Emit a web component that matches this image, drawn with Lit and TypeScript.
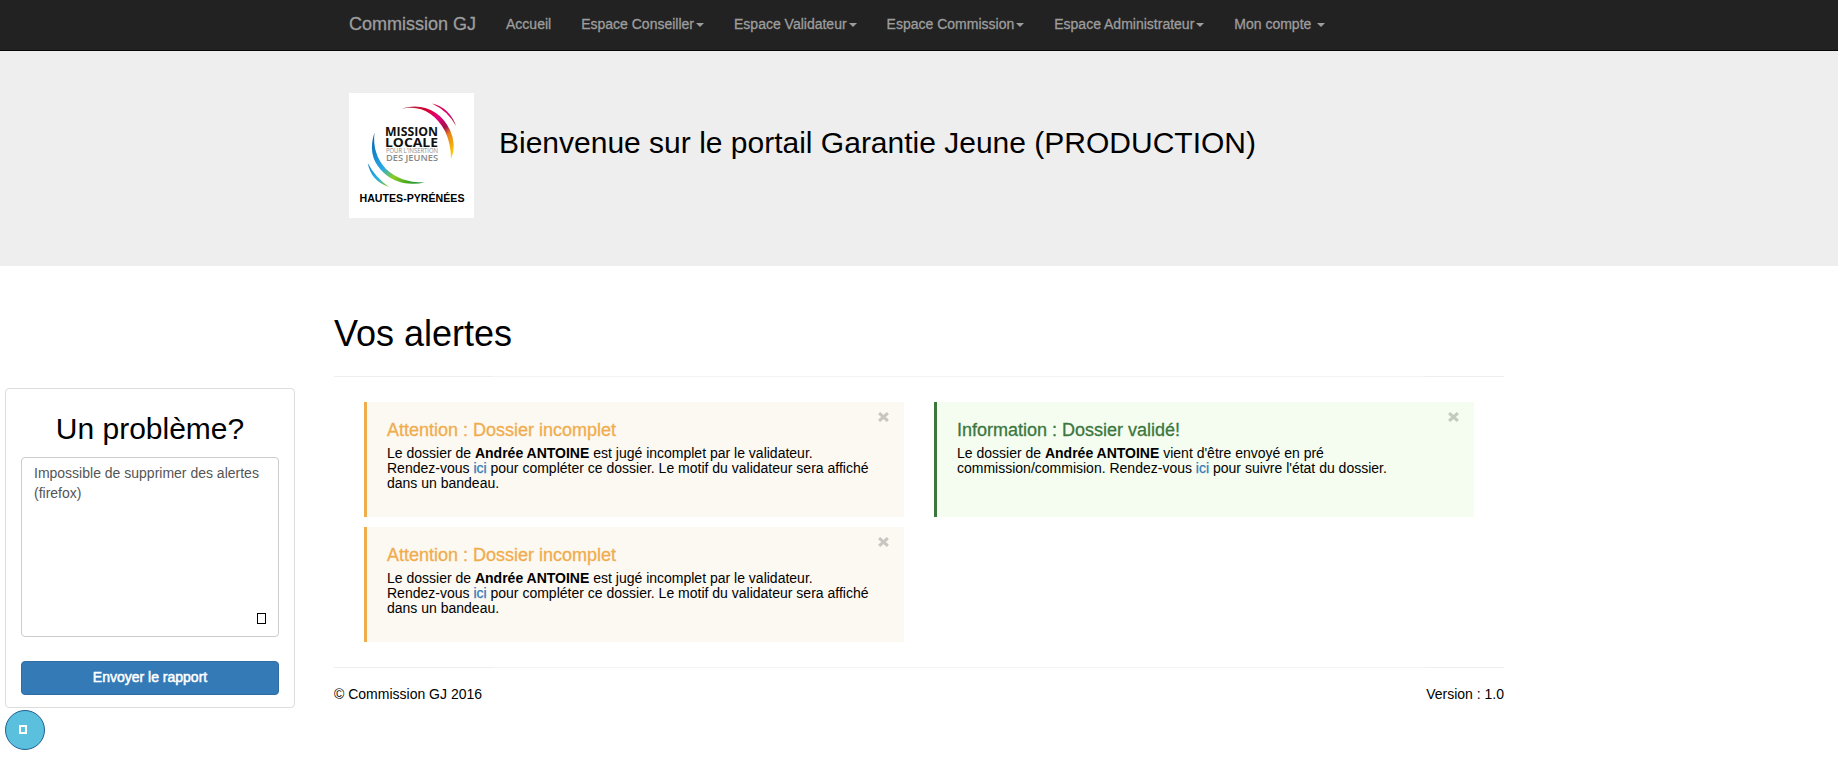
import { LitElement, html, css, svg } from "lit";
import { customElement } from "lit/decorators.js";

const shared = css`
  * { box-sizing: border-box; }
  h1, h2, h4, p { margin: 0; font-weight: 400; }
  a { color: #337ab7; text-decoration: none; }
`;

@customElement("mission-logo")
class MissionLogo extends LitElement {
  static styles = css`
    :host { display: block; width: 125px; height: 125px; background: #fff; }
    svg { display: block; font-family: "Open Sans", sans-serif; }
    .name { font-size: 11.5px; font-weight: 700; fill: #111; }
    .big { font-size: 13px; }
    .sub { font-size: 6.5px; fill: #888; }
    .young { font-size: 8.2px; font-weight: 600; fill: #888; }
    .area { font-family: "Liberation Sans", sans-serif; font-size: 10px; font-weight: 700; fill: #000; }
  `;
  render() {
    return html`<svg width="125" height="125" viewBox="0 0 125 125">
      <defs>
        <linearGradient id="warm" gradientUnits="userSpaceOnUse" x1="55" y1="12" x2="103" y2="65">
          <stop offset="0" stop-color="#a83a4a" /><stop offset=".25" stop-color="#d6002f" />
          <stop offset=".45" stop-color="#e2007a" /><stop offset=".62" stop-color="#a5104a" /><stop offset=".72" stop-color="#e8801c" /><stop offset="1" stop-color="#ffd500" />
        </linearGradient>
        <linearGradient id="thin" gradientUnits="userSpaceOnUse" x1="83" y1="10" x2="107" y2="33">
          <stop offset="0" stop-color="#d6002f" /><stop offset=".6" stop-color="#e2007a" /><stop offset="1" stop-color="#a03030" />
        </linearGradient>
        <linearGradient id="cool" gradientUnits="userSpaceOnUse" x1="24" y1="45" x2="75" y2="92">
          <stop offset="0" stop-color="#0a6cb5" /><stop offset=".4" stop-color="#25aae8" />
          <stop offset=".6" stop-color="#8ccb1e" /><stop offset="1" stop-color="#00852f" />
        </linearGradient>
        <linearGradient id="cool2" gradientUnits="userSpaceOnUse" x1="19" y1="70" x2="39" y2="92">
          <stop offset="0" stop-color="#1385cf" /><stop offset=".6" stop-color="#29b0e8" /><stop offset="1" stop-color="#7cc623" />
        </linearGradient>
      </defs>
      ${svg`
        <path fill="url(#warm)" d="M50 16.4C73 8 92 18 101 37Q108 52 102 66Q102 51 96 38C86 20 71 11 50 16.4Z" />
        <path fill="url(#thin)" d="M83 10.5Q101 15 107 33Q99 18 83 10.5Z" />
        <path fill="url(#cool)" d="M25.5 39.5Q18 62 32 77Q48 95 76 89.5Q52 90 37 76Q23 61 25.5 39.5Z" />
        <path fill="url(#cool2)" d="M18.7 70Q22 88 40 94Q26 84 18.7 70Z" />
      `}
      <text class="name" x="36" y="43" textLength="53" lengthAdjust="spacingAndGlyphs">MISSION</text>
      <text class="name big" x="36" y="53.6" textLength="53" lengthAdjust="spacingAndGlyphs">LOCALE</text>
      <text class="sub" x="37" y="60" textLength="52" lengthAdjust="spacingAndGlyphs">POUR L'INSERTION</text>
      <text class="young" x="37" y="67.6" textLength="52" lengthAdjust="spacingAndGlyphs">DES JEUNES</text>
      <text class="area" x="10.5" y="109" textLength="105" lengthAdjust="spacingAndGlyphs">HAUTES-PYRÉNÉES</text>
    </svg>`;
  }
}

@customElement("alert-card")
class AlertCard extends LitElement {
  static properties = { kind: { type: String }, heading: { type: String } };
  declare kind: string;
  declare heading: string;
  static styles = [shared, css`
    :host { display: block; }
    .card { position: relative; height: 115px; padding: 20px; border-left: 3px solid #f0ad4e; background: #fcf8f2; }
    .card.success { border-color: #3c763d; background: #f4fdf0; }
    h4 { font-size: 18px; line-height: 20px; margin: -2px 0 6px; color: #f0ad4e; -webkit-text-stroke: .3px; }
    .success h4 { color: #3c763d; }
    p { font-size: 14px; line-height: 15px; color: #000; }
    .close { position: absolute; top: 10px; right: 15px; display: block; }
  `];
  render() {
    return html`<div class="card ${this.kind}">
      <svg class="close" width="11" height="10" viewBox="0 0 11 10"><path d="M1.1 1.1L9.9 8.9M9.9 1.1L1.1 8.9" stroke="#000" stroke-opacity=".2" stroke-width="3.1" /></svg>
      <h4>${this.heading}</h4><p><slot></slot></p>
    </div>`;
  }
}

@customElement("app-root")
class AppRoot extends LitElement {
  static styles = [shared, css`
    :host { display: block; height: 775px; overflow: hidden; position: relative; background: #fff; color: #000;
      font: 14px/20px "Liberation Sans", Arial, sans-serif; }
    .navbar { height: 51px; background: #222; border-bottom: 1px solid #080808; }
    .nav { width: 1170px; margin: 0 auto; padding-left: 15px; display: flex; color: #9d9d9d; line-height: 20px; padding-top: 14px; -webkit-text-stroke: .3px; }
    .nav span { padding: 0 15px; white-space: pre; }
    .nav .brand { font-size: 18px; padding-left: 0; }
    .caret { display: inline-block; vertical-align: middle; margin-left: 2px; border: 4px solid transparent; border-top-color: currentColor; border-bottom: 0; }
    .hero { height: 215px; background: #eee; }
    .hero-in { width: 1170px; margin: 0 auto; padding: 42px 15px 0; display: flex; gap: 25px; }
    .hero h2 { font-size: 30px; line-height: 33px; margin-top: 33px; white-space: nowrap; }
    .main { width: 1170px; margin: 0 auto; padding-top: 48px; }
    .main h1 { font-size: 36px; line-height: 40px; }
    .rule { height: 1px; background: linear-gradient(90deg, #eee 158px, #f3f3f3 158px, #f3f3f3 1091px, #eee 1091px); }
    .main h1 + .rule { margin-top: 22px; }
    .alerts { display: grid; grid-template-columns: 540px 540px; gap: 10px 30px; padding: 25px 30px; }
    .alerts a { color: #337ab7; -webkit-text-stroke: .25px; }
    .foot { display: flex; justify-content: space-between; padding-top: 16px; }
    .report { position: absolute; left: 5px; top: 388px; width: 290px; }
    .panel { height: 320px; border: 1px solid #ddd; border-radius: 4px; padding: 23px 15px 0; background: #fff; }
    .panel h2 { font-size: 30px; line-height: 33px; text-align: center; margin-bottom: 12px; }
    .field { height: 180px; border: 1px solid #ccc; border-radius: 4px; padding: 5px 13px 5px 12px; color: #555; display: flex; justify-content: space-between; }
    .note { width: 232px; flex: none; }
    .glyph { width: 9px; height: 11px; border: 1px solid #000; margin-left: -9px; align-self: flex-end; flex: none; margin-bottom: 7px; }
    .send { margin-top: 24px; height: 34px; background: #337ab7; border: 1px solid #2e6da4; border-radius: 4px; color: #fff; text-align: center; line-height: 30px; -webkit-text-stroke: .5px; }
    .round { margin-top: 2px; width: 40px; height: 40px; border-radius: 50%; border: 1px solid #1f5f93; background: #5bc0de; padding: 14px 13px; }
    .round i { display: block; width: 8px; height: 9px; border: 2px solid #fff; }
  `];
  render() {
    const ici = html`<a>ici</a>`;
    const incomplete = html`<alert-card kind="warning" heading="Attention : Dossier incomplet">Le dossier de <b>Andrée ANTOINE</b> est jugé incomplet par le validateur.<br>Rendez-vous ${ici} pour compléter ce dossier. Le motif du validateur sera affiché dans un bandeau.</alert-card>`;
    const menus = ["Espace Conseiller", "Espace Validateur", "Espace Commission", "Espace Administrateur", "Mon compte "];
    return html`
      <div class="navbar"><div class="nav">
        <span class="brand">Commission GJ</span><span>Accueil</span>
        ${menus.map((m) => html`<span>${m}<i class="caret"></i></span>`)}
      </div></div>
      <div class="hero"><div class="hero-in">
        <mission-logo></mission-logo>
        <h2>Bienvenue sur le portail Garantie Jeune (PRODUCTION)</h2>
      </div></div>
      <div class="main">
        <h1>Vos alertes</h1>
        <div class="rule"></div>
        <div class="alerts">
          ${incomplete}
          <alert-card kind="success" heading="Information : Dossier validé!">Le dossier de <b>Andrée ANTOINE</b> vient d'être envoyé en pré<br>commission/commision. Rendez-vous ${ici} pour suivre l'état du dossier.</alert-card>
          ${incomplete}
        </div>
        <div class="rule"></div>
        <div class="foot"><span>© Commission GJ 2016</span><span>Version : 1.0</span></div>
      </div>
      <div class="report">
        <div class="panel">
          <h2>Un problème?</h2>
          <div class="field"><span class="note">Impossible de supprimer des alertes (firefox)</span><i class="glyph"></i></div>
          <div class="send">Envoyer le rapport</div>
        </div>
        <div class="round"><i></i></div>
      </div>`;
  }
}
